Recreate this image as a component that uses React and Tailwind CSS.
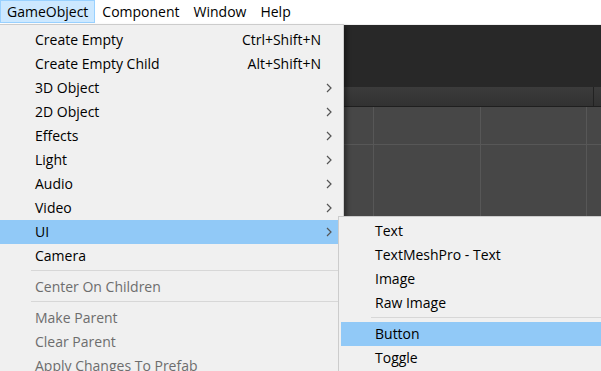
import React from "react";

const menuBar = ["GameObject", "Component", "Window", "Help"];

const mainItems = [
  { label: "Create Empty", shortcut: "Ctrl+Shift+N" },
  { label: "Create Empty Child", shortcut: "Alt+Shift+N" },
  { label: "3D Object", sub: true },
  { label: "2D Object", sub: true },
  { label: "Effects", sub: true },
  { label: "Light", sub: true },
  { label: "Audio", sub: true },
  { label: "Video", sub: true },
  { label: "UI", sub: true, active: true },
  { label: "Camera" },
  { sep: true },
  { label: "Center On Children", disabled: true },
  { sep: true },
  { label: "Make Parent", disabled: true },
  { label: "Clear Parent", disabled: true },
  { label: "Apply Changes To Prefab", disabled: true },
];

const uiItems = [
  { label: "Text" },
  { label: "TextMeshPro - Text" },
  { label: "Image" },
  { label: "Raw Image" },
  { sep: true },
  { label: "Button", active: true },
  { label: "Toggle" },
];

const Chevron = () => (
  <svg width="6" height="10" viewBox="0 0 6 10" className="shrink-0">
    <polyline points="1,1 5,5 1,9" fill="none" stroke="#555" strokeWidth="1.2" />
  </svg>
);

const MenuRow = ({ item, textLeft, sepLeft }) => {
  if (item.sep) {
    return (
      <div className="pt-[2px] pb-[4px]" style={{ paddingLeft: sepLeft }}>
        <div className="h-px bg-[#d7d7d7]" />
      </div>
    );
  }
  return (
    <div
      className={`flex items-center h-[24px] pr-[11px] ${item.active ? "bg-[#91c9f7]" : ""} ${
        item.disabled ? "text-[#6d6d6d]" : "text-black"
      }`}
      style={{ paddingLeft: textLeft }}
    >
      <span className="flex-1 whitespace-nowrap">{item.label}</span>
      {item.shortcut && <span className="whitespace-nowrap pr-[11px]">{item.shortcut}</span>}
      {item.sub && <Chevron />}
    </div>
  );
};

export default function App() {
  return (
    <div
      className="relative w-[601px] h-[371px] overflow-hidden bg-[#282828] text-[14px] leading-[20px]"
      style={{ fontFamily: '"Open Sans", "Noto Sans", sans-serif' }}
    >
      {/* menu bar */}
      <div className="flex h-[24px] bg-white">
        {menuBar.map((m, i) => (
          <div
            key={m}
            className={`flex items-center h-[23px] px-[6px] border ${
              i === 0 ? "bg-[#cce8ff] border-[#99d1ff]" : "border-transparent"
            }`}
          >
            {m}
          </div>
        ))}
      </div>

      {/* editor behind */}
      <div className="h-px bg-[#f0f0f0]" />
      <div className="h-[62px] bg-[#282828]" />
      <div className="flex h-[20px] bg-gradient-to-b from-[#3b3b3b] to-[#323232] border-b border-[#1f1f1f]">
        <div className="w-[593px]" />
        <div className="w-px bg-[#222]" />
      </div>
      <div className="relative h-[300px] bg-[#474747]">
        <svg className="absolute inset-0" width="601" height="300">
          <line x1="373.5" y1="0" x2="373.5" y2="300" stroke="#575757" />
          <line x1="480.5" y1="0" x2="480.5" y2="300" stroke="#575757" />
          <line x1="586.5" y1="0" x2="586.5" y2="300" stroke="#575757" />
          <line x1="0" y1="37.5" x2="601" y2="37.5" stroke="#575757" />
        </svg>
      </div>

      {/* GameObject dropdown */}
      <div className="absolute left-0 top-[24px] w-[344px] bg-[#f0f0f0] border-t border-r border-[#cccccc] pt-[3px] shadow-[3px_3px_4px_rgba(0,0,0,0.35)]">
        {mainItems.map((it, i) => (
          <MenuRow key={i} item={it} textLeft={35} sepLeft={31} />
        ))}
      </div>

      {/* UI submenu */}
      <div className="absolute left-[338px] top-[216px] w-[280px] bg-[#f0f0f0] border border-[#cccccc] p-[2px] pr-0">
        {uiItems.map((it, i) => (
          <MenuRow key={i} item={it} textLeft={34} sepLeft={30} />
        ))}
      </div>
    </div>
  );
}
